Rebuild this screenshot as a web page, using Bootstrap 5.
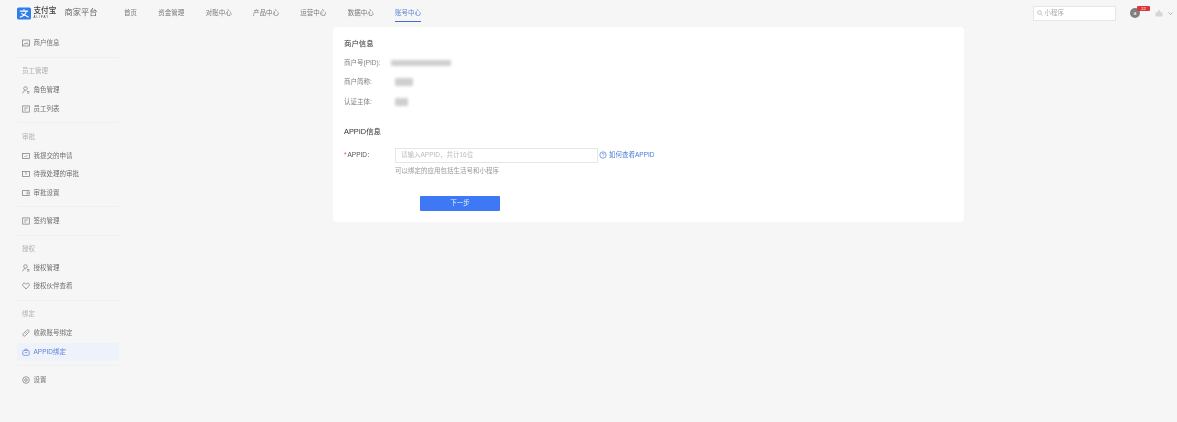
<!DOCTYPE html>
<html lang="zh"><head><meta charset="utf-8"><title>商家平台</title>
<link href="https://cdn.jsdelivr.net/npm/bootstrap@5.3.0/dist/css/bootstrap.min.css" rel="stylesheet">
<style>
html,body{height:100%}
body{background:#f6f6f6;font-family:"Liberation Sans","Noto Sans CJK SC",sans-serif;font-size:6.5px;color:#666;overflow:hidden;line-height:10px}
.softened{filter:blur(.3px);height:100%}
.topbar{height:26px;padding-left:17px}
.brand-mark{width:14px;height:13px;margin-right:2.5px;display:block}
.brand-word{width:23px;line-height:1;color:#444}
.brand-cn{font-size:7.6px;font-weight:500;line-height:8px}
.brand-en{font-size:3px;line-height:4px;letter-spacing:.95px}
.brand-title{font-size:8.25px;color:#666;margin:0 26.5px 0 8px;width:33px;white-space:nowrap}
.tnav{gap:21.33px;height:26px}
.tnav a{color:#7a7a7a;text-decoration:none;display:flex;align-items:center;height:26px;position:relative}
.tnav a.on{color:#5b84d6}
.tnav a.on::after{content:"";position:absolute;left:0;right:0;bottom:4px;height:1px;background:#3f6fd4}
.searchbox{width:83px;height:15px;background:#fff;border:1px solid #e6e6e6;margin-right:14.5px;padding-left:3px;color:#aaa;gap:2px}
.avatar-a{width:10px;height:10px;border-radius:50%;background:#7f7f7f;color:#fff;font-size:5px;position:relative;margin-right:15px}
.dot-badge{position:absolute;left:7px;top:-2px;width:13px;height:5px;border-radius:1px;background:#d9363e;color:#ffd;font-size:4px;line-height:5px;text-align:center}
.chev{width:5px;height:5px;margin:0 4px 0 5px}
.shell{align-items:flex-start}
.sidenav{width:102px;margin-left:17px;margin-top:8px;flex:none}
.snav-row{height:18.7px;padding-left:5px;gap:3.5px;color:#6f6f6f}
.snav-row svg{width:8px;height:8px;flex:none}
.snav-group{height:18.7px;padding-left:5px;color:#b0b0b0;display:flex;align-items:center}
.snav-div{height:1px;background:#f0f0f0;margin:4.2px 0}
.snav-row.on{background:#eef2fb;color:#5b84d6;border-radius:1px}
.panel{width:631px;height:195px;margin-left:214px;margin-top:1px;background:#fff;border-radius:4px;padding:11px 11px 0;flex:none}
.panel-h{font-size:7.4px;color:#333;line-height:11px;font-weight:400}
.info-row{height:19.5px;color:#808080}
.info-row .k{width:47px;flex:none}
.smudge{display:block;height:6px;background:#cfcfcf;filter:blur(1.5px);border-radius:1px}
.req{color:#e5484d;margin-right:1px}
.inputish{width:203px;height:15px;border:1px solid #e6e6e6;padding-left:5px;color:#bbb}
.help-link{color:#4a7bd8;margin-left:1px;gap:2px}
.hint{color:#999;margin:3px 0 0 51px}
.nextbtn{width:80px;height:15px;background:#3e78f4;color:#e8efff;border-radius:1px;margin:20px 0 0 76px;font-size:6.5px}
</style></head><body>
<div class="softened">
<header class="topbar d-flex align-items-center">
  <svg class="brand-mark" viewBox="0 0 15 13"><rect width="15" height="13" rx="2" fill="#2f7de8"/><path d="M3 4h9M7.5 2v2M10 4c-.7 3-3 5.5-7 6.5M4.5 6.5c2 .6 5 2.2 8 4" stroke="#fff" stroke-width="1.2" fill="none"/></svg>
  <div class="brand-word"><div class="brand-cn">支付宝</div><div class="brand-en">ALIPAY</div></div>
  <div class="brand-title">商家平台</div>
  <nav class="tnav d-flex">
    <a href="#">首页</a><a href="#">资金管理</a><a href="#">对账中心</a><a href="#">产品中心</a><a href="#">运营中心</a><a href="#">数据中心</a><a href="#" class="on">账号中心</a>
  </nav>
  <div class="ms-auto d-flex align-items-center">
    <div class="searchbox d-flex align-items-center"><svg width="6" height="6" viewBox="0 0 6 6"><circle cx="2.5" cy="2.5" r="1.8" fill="none" stroke="#aaa" stroke-width=".7"/><path d="M4 4l1.500 1.500" stroke="#aaa" stroke-width=".7"/></svg>小程序</div>
    <div class="avatar-a d-flex align-items-center justify-content-center">a<span class="dot-badge">22</span></div>
    <svg width="8" height="8" viewBox="0 0 8 8"><path d="M4 .5 6 3.500H7.500V7.500H.5V3.500H2Z" fill="#d5d5d5"/></svg>
    <svg class="chev" viewBox="0 0 5 5"><path d="M.5 1.500 2.500 3.500 4.500 1.500" fill="none" stroke="#999" stroke-width=".7"/></svg>
  </div>
</header>
<div class="shell d-flex">
  <aside class="sidenav">
    <div class="snav-row d-flex align-items-center"><svg viewBox="0 0 8 8"><rect x=".5" y="1" width="7" height="6" fill="none" stroke="#777" stroke-width=".7"/><path d="M1.500 6 3 4l1 1 1-1.500L6.500 6" fill="none" stroke="#777" stroke-width=".6"/></svg>商户信息</div>
    <div class="snav-div"></div>
    <div class="snav-group">员工管理</div>
    <div class="snav-row d-flex align-items-center"><svg viewBox="0 0 8 8"><circle cx="3.500" cy="2.500" r="1.800" fill="none" stroke="#777" stroke-width=".7"/><path d="M.7 7.300C1 5.300 2.300 4.700 3.500 4.700M5 5.500h2.500M5 7h2.500" fill="none" stroke="#777" stroke-width=".7"/></svg>角色管理</div>
    <div class="snav-row d-flex align-items-center"><svg viewBox="0 0 8 8"><rect x=".7" y=".9" width="6.600" height="6.200" fill="none" stroke="#777" stroke-width=".7"/><path d="M2.200 3h3.600M2.200 5h2" stroke="#777" stroke-width=".7"/></svg>员工列表</div>
    <div class="snav-div"></div>
    <div class="snav-group">审批</div>
    <div class="snav-row d-flex align-items-center"><svg viewBox="0 0 8 8"><rect x=".5" y="1.500" width="7" height="5" fill="none" stroke="#777" stroke-width=".7"/><path d="M2.500 4l1 1 2-2" fill="none" stroke="#777" stroke-width=".6"/></svg>我提交的申请</div>
    <div class="snav-row d-flex align-items-center"><svg viewBox="0 0 8 8"><rect x=".5" y="1.500" width="7" height="5" fill="none" stroke="#777" stroke-width=".7"/><path d="M4 1.500v3" stroke="#777" stroke-width=".7"/></svg>待我处理的审批</div>
    <div class="snav-row d-flex align-items-center"><svg viewBox="0 0 8 8"><path d="M7.500 2V1.500H.5v5h7V6" fill="none" stroke="#777" stroke-width=".7"/><rect x="5" y="3" width="2.500" height="2" fill="none" stroke="#777" stroke-width=".6"/></svg>审批设置</div>
    <div class="snav-div"></div>
    <div class="snav-row d-flex align-items-center"><svg viewBox="0 0 8 8"><rect x=".7" y=".9" width="6.600" height="6.200" fill="none" stroke="#777" stroke-width=".7"/><path d="M2.200 3h3.600M2.200 5h2" stroke="#777" stroke-width=".7"/></svg>签约管理</div>
    <div class="snav-div"></div>
    <div class="snav-group">授权</div>
    <div class="snav-row d-flex align-items-center"><svg viewBox="0 0 8 8"><circle cx="3.500" cy="2.500" r="1.800" fill="none" stroke="#777" stroke-width=".7"/><path d="M.7 7.300C1 5.300 2.300 4.700 3.500 4.700M5 5.500h2.500M5 7h2.500" fill="none" stroke="#777" stroke-width=".7"/></svg>授权管理</div>
    <div class="snav-row d-flex align-items-center"><svg viewBox="0 0 8 8"><path d="M4 7 .8 3.500C0 2 1.500.9 2.500 1.200 3.200 1.400 3.700 1.800 4 2.300 4.300 1.800 4.800 1.400 5.500 1.200 6.500.9 8 2 7.200 3.500Z" fill="none" stroke="#777" stroke-width=".7"/></svg>授权伙伴查看</div>
    <div class="snav-div"></div>
    <div class="snav-group">绑定</div>
    <div class="snav-row d-flex align-items-center"><svg viewBox="0 0 8 8"><path d="M3.300 4.700 4.700 3.300M3 3 1.300 4.700a1.300 1.300 0 0 0 2 2L5 5M5 5l1.700-1.700a1.300 1.300 0 0 0-2-2L3 3" fill="none" stroke="#777" stroke-width=".7"/></svg>收款账号绑定</div>
    <div class="snav-row on d-flex align-items-center"><svg viewBox="0 0 8 8"><rect x=".8" y="2.500" width="6.400" height="4.800" rx="1" fill="none" stroke="#5b84d6" stroke-width=".7"/><path d="M2.500 2.500a1.500 1.500 0 0 1 3 0M2.800 4.500h2.400" fill="none" stroke="#5b84d6" stroke-width=".7"/></svg>APPID绑定</div>
    <div class="snav-div"></div>
    <div class="snav-row d-flex align-items-center"><svg viewBox="0 0 8 8"><circle cx="4" cy="4" r="3.300" fill="none" stroke="#777" stroke-width=".7"/><circle cx="4" cy="4" r="1.300" fill="none" stroke="#777" stroke-width=".7"/></svg>设置</div>
  </aside>
  <main class="panel">
    <div class="panel-h mb-1">商户信息</div>
    <div class="info-row d-flex align-items-center"><span class="k">商户号(PID):</span><span class="smudge" style="width:60px"></span></div>
    <div class="info-row d-flex align-items-center"><span class="k">商户简称:</span><span class="smudge ms-1" style="width:18px;height:8px"></span></div>
    <div class="info-row d-flex align-items-center"><span class="k">认证主体:</span><span class="smudge ms-1" style="width:13px;height:8px"></span></div>
    <div class="panel-h" style="margin-top:14px">APPID信息</div>
    <div class="d-flex align-items-center" style="margin-top:11px">
      <span style="width:51px;flex:none;color:#555"><span class="req">*</span>APPID：</span>
      <div class="inputish d-flex align-items-center">请输入APPID，共计16位</div>
      <div class="help-link d-flex align-items-center"><svg width="8" height="8" viewBox="0 0 8 8"><circle cx="4" cy="4" r="3.200" fill="none" stroke="#4a7bd8" stroke-width=".7"/><path d="M3 3.200a1 1 0 1 1 1.500.8C4 4.300 4 4.500 4 5M4 5.800v.5" fill="none" stroke="#4a7bd8" stroke-width=".6"/></svg>如何查看APPID</div>
    </div>
    <div class="hint">可以绑定的应用包括生活号和小程序</div>
    <div class="nextbtn d-flex align-items-center justify-content-center">下一步</div>
  </main>
</div>
</div>
<script src="https://cdn.jsdelivr.net/npm/bootstrap@5.3.0/dist/js/bootstrap.bundle.min.js"></script>
</body></html>
